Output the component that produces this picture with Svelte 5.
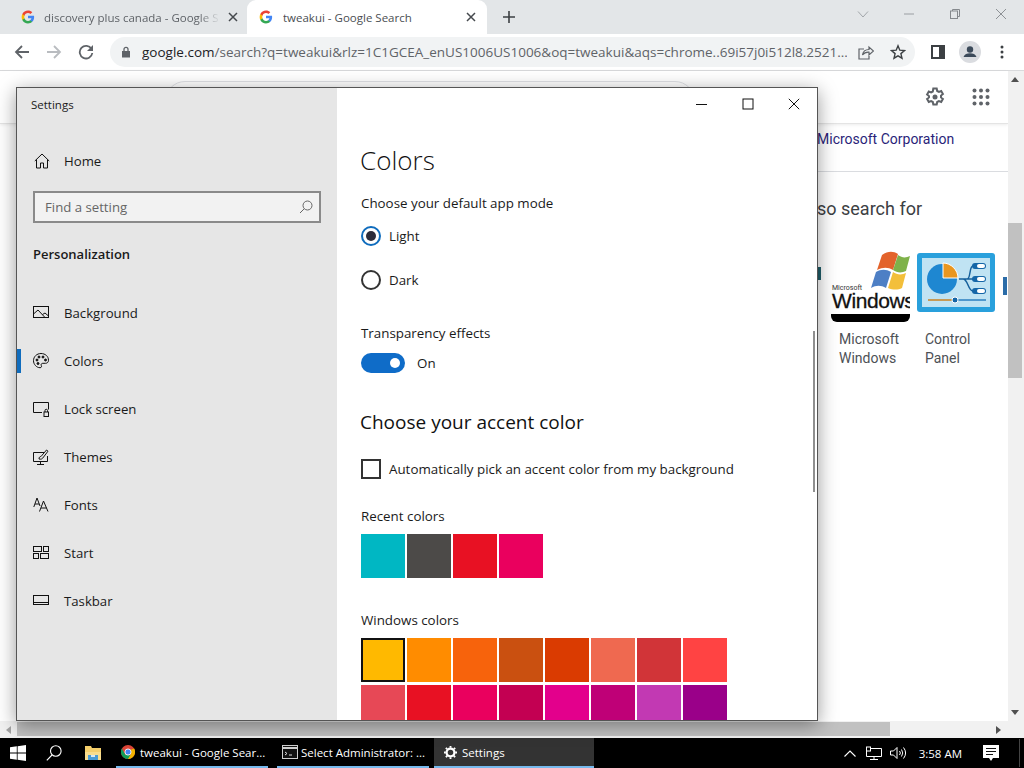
<script>
  const nav = [
    ['Background', 'bg'], ['Colors', 'colors'], ['Lock screen', 'lock'], ['Themes', 'themes'],
    ['Fonts', 'fonts'], ['Start', 'start'], ['Taskbar', 'taskbar']
  ];
  const recent = ['#00b7c3', '#4c4a48', '#e81123', '#ea005e'];
  const win = ['#ffb900', '#ff8c00', '#f7630c', '#ca5010', '#da3b01', '#ef6950', '#d13438', '#ff4343',
    '#e74856', '#e81123', '#ea005e', '#c30052', '#e3008c', '#bf0077', '#c239b3', '#9a0089'];
</script>

{#snippet gicon()}
  <svg class="fav" viewBox="0 0 48 48" width="14" height="14">
    <path fill="#4285f4" d="M45 24c0-1.600-.1-3-.4-4.500H24v9h11.800c-.5 2.800-2 5-4.400 6.600v5.500h7.100C42.700 36.700 45 30.900 45 24z"/>
    <path fill="#34a853" d="M24 46c5.900 0 10.900-2 14.500-5.300l-7.100-5.500c-2 1.300-4.500 2.100-7.400 2.100-5.700 0-10.500-3.800-12.200-9H4.500v5.700C8.100 41.100 15.500 46 24 46z"/>
    <path fill="#fbbc05" d="M11.800 28.300c-.9-2.700-.9-5.800 0-8.600V14H4.500C1.500 20 1.500 28 4.500 34z"/>
    <path fill="#ea4335" d="M24 10.700c3.200 0 6.100 1.100 8.400 3.300l6.300-6.300C34.900 4.100 29.900 2 24 2 15.500 2 8.100 6.900 4.500 14l7.300 5.700c1.700-5.200 6.500-9 12.200-9z"/>
  </svg>
{/snippet}

{#snippet navicon(k)}
  <svg class="navicon" viewBox="0 0 16 16" width="16" height="16" fill="none" stroke="#111" stroke-width="1">
    {#if k === 'bg'}
      <rect x="0.500" y="1.500" width="15" height="11"/><path d="M.5 9 5 5l7 7.500M9.500 9.500 12 8l3.500 3"/>
    {:else if k === 'colors'}
      <path d="M8 .5C3.800.5.500 3.600.5 7.700c0 3.600 3 7 6.500 7 1.600 0 1.800-1.100 1.300-2.100-.6-1.300.2-2.300 1.500-2.300h2.700c1.800 0 3-1.200 3-3C15.500 3.300 12.200.5 8 .5z"/>
      <circle cx="4" cy="7" r="1" fill="#111"/><circle cx="6" cy="4" r="1" fill="#111"/><circle cx="10" cy="4" r="1" fill="#111"/><circle cx="12.500" cy="7" r="1" fill="#111"/><circle cx="5" cy="10.500" r="1" fill="#111"/>
    {:else if k === 'lock'}
      <path d="M9 11.500H.5v-10h15v7"/><rect x="11" y="11" width="4.500" height="4.500"/><path d="M12 11V9.500a1.200 1.200 0 0 1 2.500 0V11"/>
    {:else if k === 'themes'}
      <path d="M11 3.500H.5v9h14V7M7.500 12.500v2.500M4 15.500h7"/><path d="M6 10c0-2 1-2.500 2-2.500l5.500-6.500 1.500 1.200L9.800 9C9 10 8 10.500 6 10z"/>
    {:else if k === 'fonts'}
      <path d="M.8 10 4 1l3 8M2 7h4M6.500 14.500 10.500 4l4.500 10.500M8 11h5.500"/>
    {:else if k === 'start'}
      <rect x="0.500" y="1.500" width="8" height="5"/><rect x="10.500" y="1.500" width="5" height="5"/><rect x="0.500" y="8.500" width="5" height="5"/><rect x="7.500" y="8.500" width="8" height="5"/>
    {:else}
      <rect x="0.500" y="2.500" width="15" height="9"/><path d="M.5 9.500h15"/>
    {/if}
  </svg>
{/snippet}

<div class="screen">
  <div class="tabstrip">
    <div class="tab inactive">
      {@render gicon()}
      <span class="tabtitle fade">discovery plus canada - Google S</span>
      <svg class="tabx" viewBox="0 0 10 10" width="10" height="10"><path d="M1 1l8 8M9 1l-8 8" stroke="#45494d" stroke-width="1.500"/></svg>
    </div>
    <div class="tab active">
      {@render gicon()}
      <span class="tabtitle">tweakui - Google Search</span>
      <svg class="tabx" viewBox="0 0 10 10" width="10" height="10"><path d="M1 1l8 8M9 1l-8 8" stroke="#45494d" stroke-width="1.500"/></svg>
    </div>
    <svg class="plus" viewBox="0 0 12 12" width="12" height="12"><path d="M6 0v12M0 6h12" stroke="#3c4043" stroke-width="1.600"/></svg>
    <div class="winctl">
      <svg viewBox="0 0 12 12" width="12" height="12"><path d="M1 3.500l5 5.500 5-5.500" fill="none" stroke="#a2a6aa"/></svg>
      <svg viewBox="0 0 12 12" width="12" height="12"><path d="M1 6h10" stroke="#9a9ea2"/></svg>
      <svg viewBox="0 0 12 12" width="12" height="12" fill="none" stroke="#85898d"><rect x="1.500" y="3" width="7" height="7.500"/><path d="M3.500 3V1.500h7v7H8.500"/></svg>
      <svg viewBox="0 0 12 12" width="12" height="12"><path d="M1 1l10 10M11 1 1 11" stroke="#8d9195"/></svg>
    </div>
  </div>

  <div class="toolbar">
    <svg class="tool" viewBox="0 0 16 16" width="16" height="16"><path d="M15 8H2M8 2 2 8l6 6" fill="none" stroke="#5f6368" stroke-width="1.800"/></svg>
    <svg class="tool" viewBox="0 0 16 16" width="16" height="16"><path d="M1 8h13M8 2l6 6-6 6" fill="none" stroke="#b9bcc0" stroke-width="1.800"/></svg>
    <svg class="tool" viewBox="0 0 16 16" width="16" height="16"><path d="M13.500 5A6.300 6.300 0 1 0 14.300 9" fill="none" stroke="#5f6368" stroke-width="1.800"/><path d="M15 1v6H9z" fill="#5f6368"/></svg>
    <div class="omnibox">
      <svg viewBox="0 0 10 12" width="10" height="12"><path d="M1 5h8v6.500H1z" fill="#5f6368"/><path d="M3 5V3.300a2 2 0 0 1 4 0V5" fill="none" stroke="#5f6368" stroke-width="1.300"/></svg>
      <span class="url"><b>google.com</b>/search?q=tweakui&amp;rlz=1C1GCEA_enUS1006US1006&amp;oq=tweakui&amp;aqs=chrome..69i57j0i512l8.2521...</span>
      <svg class="share" viewBox="0 0 16 16" width="16" height="16" fill="none" stroke="#5f6368" stroke-width="1.200"><path d="M6 5H1v10h10v-3"/><path d="M4.500 11c.5-3.500 3-5.500 6.500-5.500V3l4.500 4-4.500 4V8.200C8.500 8 6 9 4.500 11z"/></svg>
      <svg class="star" viewBox="0 0 16 16" width="16" height="16"><path d="M8 1.800l1.800 4.400 4.700.4-3.600 3 1.100 4.600L8 11.800l-4 2.400 1.100-4.600-3.600-3 4.700-.4z" fill="none" stroke="#3c4043" stroke-width="1.400"/></svg>
    </div>
    <svg class="panel" viewBox="0 0 14 14" width="14" height="14"><rect x="1" y="1" width="12" height="12" fill="none" stroke="#3c4043" stroke-width="2"/><rect x="8" y="1" width="5" height="12" fill="#3c4043"/></svg>
    <div class="avatar">
      <svg viewBox="0 0 22 22" width="22" height="22"><circle cx="11" cy="11" r="11" fill="#dadce0"/><circle cx="11" cy="8.500" r="3.200" fill="#3c4a5a"/><path d="M4.500 16c1-2.800 3.500-3.800 6.500-3.800s5.500 1 6.500 3.800z" fill="#3c4a5a"/></svg>
    </div>
    <svg class="dots" viewBox="0 0 4 14" width="4" height="14"><circle cx="2" cy="2" r="1.500" fill="#3c4043"/><circle cx="2" cy="7" r="1.500" fill="#3c4043"/><circle cx="2" cy="12" r="1.500" fill="#3c4043"/></svg>
  </div>

  <div class="viewport">
    <div class="page">
      <div class="gheader">
        <div class="searchbox"></div>
        <svg class="gear" viewBox="0 0 20 20" width="20" height="20" fill="none" stroke="#5f6368" stroke-width="2"><path d="M8.300 1.500h3.400l.5 2.500 1.700.9 2.300-.9 1.700 3-1.900 1.600v1.800l1.900 1.600-1.700 3-2.300-.9-1.700.9-.5 2.500H8.300l-.5-2.500-1.700-.9-2.300.9-1.700-3 1.900-1.600V9.100L2.100 7.500l1.700-3 2.300.9 1.700-.9z"/><circle cx="10" cy="10" r="2.500" fill="#5f6368" stroke="none"/></svg>
        <svg class="apps" viewBox="0 0 18 18" width="18" height="18" fill="#5f6368">
          {#each [2.500, 9, 15.500] as y}{#each [2.500, 9, 15.500] as x}<circle cx={x} cy={y} r="2"/>{/each}{/each}
        </svg>
      </div>
      <div class="results">
        <div class="corp">Microsoft Corporation</div>
        <div class="rule"></div>
        <div class="also">so search for</div>
        <div class="cards">
          <div class="frag left"></div>
          <div class="card">
            <div class="winlogo">
              <svg class="flag" viewBox="0 0 40 42" width="40" height="42">
                <path d="M10 6c6-4 11-4 16-1l-5 16c-5-3-10-3-16 0z" fill="#e3632b" transform="translate(2 -1)"/>
                <path d="M28 5c4 3 8 3 12 1l-4 15c-4 2-9 2-13-1z" fill="#7fb24a"/>
                <path d="M6 22c5-3 10-3 15 0l-5 16c-5-3-10-3-15 0z" fill="#4d7fc5"/>
                <path d="M23 22c4 3 9 3 13 1l-4 15c-4 2-9 2-14 0z" fill="#f3bf3a"/>
              </svg>
              <span class="ms">Microsoft</span>
              <span class="wn">Windows</span>
              <div class="blackbar"></div>
            </div>
            <div class="cap">Microsoft<br>Windows</div>
          </div>
          <div class="card">
            <div class="cpanel">
              <svg viewBox="0 0 78 59" width="78" height="59">
                <rect width="78" height="59" rx="3" fill="#29a0dc"/>
                <rect x="5" y="5" width="68" height="49" fill="#c0e3f3"/>
                <circle cx="25" cy="26" r="15" fill="#1e87d1"/>
                <path d="M26 10v15h15c0-8-7-15-15-15z" fill="#e9961f" stroke="#fff"/>
                <path d="M42 26h8c4 0 2-13 6-13M50 26h6M46 26c5 0 5 12 10 12" fill="none" stroke="#15609c" stroke-width="1.500"/>
                <rect x="55" y="10" width="14" height="6" rx="3" fill="#1466a8"/><rect x="60" y="11" width="8" height="4" rx="2" fill="#fff"/>
                <rect x="55" y="23" width="14" height="6" rx="3" fill="#1466a8"/><rect x="60" y="24" width="8" height="4" rx="2" fill="#fff"/>
                <rect x="55" y="35" width="14" height="6" rx="3" fill="#1466a8"/><rect x="60" y="36" width="8" height="4" rx="2" fill="#fff"/>
                <path d="M11 47h26" stroke="#c79a55" stroke-width="2"/><path d="M40 47h29" stroke="#2b7fc0" stroke-width="1.500"/>
                <circle cx="38" cy="47" r="3" fill="#1466a8" stroke="#fff"/>
              </svg>
            </div>
            <div class="cap">Control<br>Panel</div>
          </div>
          <div class="frag right"></div>
        </div>
      </div>
      <div class="vscroll">
        <svg class="arrow" viewBox="0 0 8 5" width="8" height="5"><path d="M4 0l4 5H0z" fill="#505050"/></svg>
        <div class="vthumb"></div>
        <svg class="arrow down" viewBox="0 0 8 5" width="8" height="5"><path d="M4 5l4-5H0z" fill="#505050"/></svg>
      </div>
    </div>
    <div class="hscroll">
      <svg viewBox="0 0 5 8" width="5" height="8"><path d="M0 4l5-4v8z" fill="#a3a3a3"/></svg>
      <div class="hthumb"></div>
      <svg viewBox="0 0 5 8" width="5" height="8"><path d="M5 4 0 0v8z" fill="#505050"/></svg>
    </div>

    <div class="window">
      <aside class="side">
        <div class="wintitle">Settings</div>
        <div class="home">
          <svg class="navicon" viewBox="0 0 16 16" width="16" height="16" fill="none" stroke="#111"><path d="M.8 8 8 1l7.200 7M2.500 6.500v8.500h4v-5h3v5h4V6.500"/></svg>
          <span>Home</span>
        </div>
        <div class="find">
          <span>Find a setting</span>
          <svg viewBox="0 0 14 14" width="14" height="14" fill="none" stroke="#666"><circle cx="8.500" cy="5.500" r="4.500"/><path d="M5.200 8.800 1 13"/></svg>
        </div>
        <div class="cat">Personalization</div>
        <nav>
          {#each nav as [label, k]}
            <div class="row" class:sel={k === 'colors'}>
              {@render navicon(k)}
              <span>{label}</span>
            </div>
          {/each}
        </nav>
      </aside>
      <main class="content">
        <div class="caption">
          <svg viewBox="0 0 12 12" width="12" height="12"><path d="M0 6.500h11" stroke="#111"/></svg>
          <svg viewBox="0 0 12 12" width="12" height="12"><rect x="1" y="1" width="10" height="10" fill="none" stroke="#111"/></svg>
          <svg viewBox="0 0 12 12" width="12" height="12"><path d="M.8.800l10.400 10.400M11.200.800.800 11.200" stroke="#111"/></svg>
        </div>
        <h1>Colors</h1>
        <div class="label first">Choose your default app mode</div>
        <div class="radio">
          <span class="dot on"><i></i></span><span>Light</span>
        </div>
        <div class="radio">
          <span class="dot"></span><span>Dark</span>
        </div>
        <div class="label trans">Transparency effects</div>
        <div class="toggle">
          <span class="switch"><i></i></span><span>On</span>
        </div>
        <h2>Choose your accent color</h2>
        <div class="check"><span class="box"></span><span>Automatically pick an accent color from my background</span></div>
        <div class="label recent">Recent colors</div>
        <div class="swatches">
          {#each recent as c}<div class="sw" style="background:{c}"></div>{/each}
        </div>
        <div class="label wcol">Windows colors</div>
        <div class="swatches">
          {#each win as c, i}<div class="sw" class:picked={i === 0} style="background:{c}"></div>{/each}
        </div>
        <div class="cscroll"></div>
      </main>
    </div>
  </div>

  <div class="taskbar">
    <svg class="start" viewBox="0 0 16 16" width="16" height="16"><path d="M0 2.300 6.800 1.300v6.300H0zM7.600 1.200 16 0v7.600H7.600zM0 8.400h6.800v6.300L0 13.700zM7.600 8.400H16V16l-8.400-1.200z" fill="#fff"/></svg>
    <svg class="tsearch" viewBox="0 0 16 16" width="16" height="16" fill="none" stroke="#fff" stroke-width="1.100"><circle cx="9.800" cy="6" r="5.300"/><path d="M6 10 .8 15.300"/></svg>
    <svg class="folder" viewBox="0 0 16 16" width="16" height="16"><path d="M0 1h6l1 2h9v12H0z" fill="#f5cf6b"/><path d="M0 7h16v8H0z" fill="#f9dd8d"/><path d="M3 10h10v5H3z" fill="#4a9bd4"/><path d="M6 10h4v2H6z" fill="#d8e9f3"/></svg>
    <div class="titem chrome">
      <svg viewBox="0 0 16 16" width="14" height="14"><circle cx="8" cy="8" r="8" fill="#db4437"/><path d="M8 16A8 8 0 0 1 1 4l4 7 7 0.500z" fill="#0f9d58"/><path d="M15 4A8 8 0 0 1 8 16l3.500-6V5z" fill="#f4b400"/><circle cx="8" cy="8" r="3.500" fill="#4285f4" stroke="#fff"/></svg>
      <span>tweakui - Google Sear...</span>
    </div>
    <div class="titem cmd">
      <svg viewBox="0 0 16 14" width="16" height="14"><rect x=".5" y=".5" width="15" height="13" fill="#111" stroke="#cfcfcf"/><path d="M.5 3h15" stroke="#cfcfcf" stroke-width="2"/><path d="M3 7l2 1.500L3 10M7 10h3" stroke="#ddd" fill="none"/></svg>
      <span>Select Administrator: ...</span>
    </div>
    <div class="titem settings">
      <svg viewBox="0 0 14 14" width="13" height="13"><circle cx="7" cy="7" r="4.200" fill="none" stroke="#fff" stroke-width="2.400"/><path d="M7 0v14M0 7h14M2 2l10 10M12 2 2 12" stroke="#fff" stroke-width="2" stroke-dasharray="2 10 2 0"/></svg>
      <span>Settings</span>
    </div>
    <div class="tray">
      <svg class="chev" viewBox="0 0 12 7" width="12" height="7"><path d="M.5 6.500 6 1l5.500 5.500" fill="none" stroke="#fff" stroke-width="1.100"/></svg>
      <svg viewBox="0 0 16 14" width="16" height="14" fill="none" stroke="#fff"><path d="M4 2.500h11.500v8H.5V1M8 10.500V13M4 13.500h8"/><rect x=".5" y="1" width="4" height="4"/></svg>
      <svg viewBox="0 0 16 14" width="16" height="14" fill="none" stroke="#fff"><path d="M.5 5v4h3l3.500 3.500v-11L3.500 5zM9.500 5a3 3 0 0 1 0 4M11.500 3.500a6 6 0 0 1 0 7M13.500 1.500a9 9 0 0 1 0 11"/></svg>
      <span class="clock">3:58 AM</span>
      <svg class="notif" viewBox="0 0 16 17" width="16" height="17"><path d="M0 0h16v13h-6l-2 3-2-3H0z" fill="#fff"/><path d="M3 3.500h10M3 6.500h10M3 9.500h7" stroke="#111"/></svg>
      <div class="divider"></div>
    </div>
  </div>
</div>

<style>
  :global(body) { margin: 0; background: #fff; }
  .screen {
    width: 1024px; height: 768px; overflow: hidden; display: flex; flex-direction: column;
    font-family: "Open Sans", "Noto Sans", sans-serif; color: #1a1a1a;
  }

  .tabstrip { height: 34px; background: #e3e6e8; display: flex; align-items: flex-end; padding-left: 8px; flex: none; }
  .tab { width: 240px; height: 34px; display: flex; align-items: center; box-sizing: border-box; font-size: 11.500px; color: #5f6368; }
  .tab.inactive { padding: 0 9px 0 13px; width: 239px; }
  .tab.active { background: #fff; border-radius: 9px 9px 0 0; padding: 0 11px 0 12px; color: #4a4e52; }
  .fav { flex: none; margin-right: 9px; }
  .active .fav { margin-right: 10px; }
  .tabtitle { flex: 1; white-space: nowrap; overflow: hidden; }
  .fade { -webkit-mask-image: linear-gradient(90deg, #000 88%, transparent 100%); mask-image: linear-gradient(90deg, #000 88%, transparent 100%); margin-right: 8px; }
  .plus { margin: 0 0 11px 16px; }
  .winctl { margin-left: auto; display: flex; gap: 34px; padding: 0 17px 14px 0; align-self: flex-end; }

  .toolbar { height: 37px; box-sizing: border-box; background: #fff; display: flex; align-items: center; border-bottom: 1px solid #d9dadc; flex: none; padding-left: 14px; }
  .tool { margin-right: 16px; }
  .omnibox { width: 805px; height: 30px; border-radius: 15px; background: #f1f3f4; display: flex; align-items: center; padding-left: 11px; box-sizing: border-box; font-size: 13.500px; color: #5f6368; flex: none; }
  .omnibox svg { flex: none; }
  .url { margin-left: 11px; white-space: nowrap; width: 705px; overflow: hidden; flex: none; }
  .url b { font-weight: 400; color: #202124; }
  .share { margin-left: 11px; }
  .star { margin-left: 16px; }
  .panel { margin-left: 16px; }
  .avatar { margin-left: 14px; height: 22px; }
  .dots { margin-left: 19px; }

  .viewport { position: relative; flex: 1; display: flex; flex-direction: column; background: #fff; min-height: 0; }
  .page { flex: 1; position: relative; display: flex; flex-direction: column; min-height: 0; padding-right: 16px; }
  .gheader { height: 53px; box-sizing: border-box; flex: none; display: flex; align-items: center; border-bottom: 1px solid #e4e4e4; box-shadow: 0 1px 3px rgba(0,0,0,.08); padding-left: 165px; }
  .searchbox { width: 530px; height: 40px; align-self: flex-start; margin-top: 10px; border: 1px solid #dfe1e5; border-radius: 20px; box-sizing: border-box; }
  .gear { margin-left: 230px; }
  .apps { margin-left: 27px; margin-right: 18px; }
  .results { padding-left: 817px; flex: 1; overflow: hidden; }
  .corp { font-family: Roboto, sans-serif; font-size: 14px; color: #2b1f7a; margin-top: 6px; line-height: 18px; white-space: nowrap; }
  .rule { height: 1px; background: #dadce0; margin-top: 23px; }
  .also { font-family: Roboto, sans-serif; font-size: 18px; line-height: 24px; color: #3c4043; margin-top: 25px; }
  .cards { display: flex; margin-top: 25px; gap: 7px; }
  .frag { width: 4px; flex: none; }
  .frag.left { margin-right: 3px; height: 13px; margin-top: 21px; background: #1f5f6a; }
  .frag.right { height: 18px; margin-top: 31px; background: #2b6ca8; }
  .card { width: 79px; flex: none; font-family: Roboto, sans-serif; font-size: 14px; color: #4d5156; }
  .cap { line-height: 19px; padding-left: 8px; margin-top: 8px; white-space: nowrap; }
  .winlogo { height: 76px; width: 79px; position: relative; overflow: hidden; }
  .flag { position: absolute; left: 39px; top: 4px; }
  .ms { position: absolute; left: 1px; top: 39px; font-size: 7px; line-height: 6px; color: #333; }
  .wn { position: absolute; left: 1px; top: 45px; font-family: "Liberation Sans", sans-serif; font-size: 21px; font-weight: 400; line-height: 20px; color: #111; -webkit-text-stroke: .3px #111; letter-spacing: -.4px; }
  .blackbar { position: absolute; left: 0; right: 0; bottom: 0; height: 8px; background: #000; border-radius: 0 0 6px 6px; }
  .cpanel { height: 76px; padding-top: 7px; box-sizing: border-box; }
  .vscroll { position: absolute; right: 0; top: 0; bottom: 0; width: 16px; background: #f1f1f1; box-sizing: border-box; display: flex; flex-direction: column; align-items: flex-start; }
  .arrow { margin: 6px 0 0 3px; flex: none; }
  .arrow.down { margin-top: auto; margin-bottom: 6px; }
  .vthumb { width: 14px; height: 155px; background: #c1c1c1; margin-top: 141px; flex: none; }
  .hscroll { height: 17px; flex: none; background: #f1f1f1; display: flex; align-items: center; padding: 0 23px 0 6px; position: relative; z-index: 1; gap: 6px; }
  .hthumb { width: 873px; height: 14px; margin-bottom: 1px; background: #c1c1c1; margin-right: auto; }

  .window { position: absolute; z-index: 2; left: 16px; top: 16px; width: 802px; height: 634px; box-sizing: border-box; border: 1px solid #555; display: flex; overflow: hidden; box-shadow: 0 4px 18px rgba(0,0,0,.4); background: #fff; }
  .side { width: 320px; flex: none; background: #e6e6e6; display: flex; flex-direction: column; font-size: 13.200px; color: #1a1a1a; }
  .wintitle { font-size: 11.500px; line-height: 16px; padding: 9px 0 0 14px; }
  .home { display: flex; align-items: center; gap: 14px; margin-top: 38px; padding-left: 17px; height: 20px; }
  .find { margin: 20px 0 0 16px; width: 288px; height: 32px; box-sizing: border-box; border: 2px solid #8a8a8a; background: #f2f2f2; display: flex; align-items: center; justify-content: space-between; padding: 0 6px 0 10px; color: #666; }
  .cat { font-weight: 600; font-size: 13px; line-height: 18px; margin: 22px 0 0 16px; }
  nav { margin-top: 26px; display: flex; flex-direction: column; }
  .row { height: 48px; display: flex; align-items: center; gap: 15px; padding-left: 16px; position: relative; }
  .row.sel::before { content: ""; position: absolute; left: 0; top: 12px; width: 4px; height: 24px; background: #0f6cbd; }
  .navicon { flex: none; }

  .content { flex: 1; position: relative; padding-left: 24px; font-size: 13.350px; color: #1a1a1a; }
  .caption { display: flex; gap: 34px; justify-content: flex-end; padding: 10px 17px 0 0; height: 12px; }
  h1 { font-size: 26px; font-weight: 300; line-height: 34px; margin: 33px 0 0 -1px; color: #111; }
  .label { line-height: 18px; }
  .label.first { margin-top: 17px; }
  .radio { display: flex; align-items: center; gap: 8px; height: 20px; margin-top: 14px; }
  .radio + .radio { margin-top: 24px; }
  .dot { width: 20px; height: 20px; box-sizing: border-box; border: 2px solid #333; border-radius: 50%; display: flex; align-items: center; justify-content: center; }
  .dot.on { border-color: #0f6cbd; }
  .dot i { width: 10px; height: 10px; background: #2c2c3a; border-radius: 50%; }
  .label.trans { margin-top: 34px; }
  .toggle { display: flex; align-items: center; gap: 12px; margin-top: 11px; height: 20px; }
  .switch { width: 44px; height: 20px; background: #0f6cc8; border-radius: 10px; position: relative; }
  .switch i { position: absolute; right: 5px; top: 5px; width: 10px; height: 10px; background: #fff; border-radius: 50%; }
  h2 { font-size: 19px; font-weight: 400; line-height: 26px; margin: 36px 0 0 -1px; color: #111; }
  .check { display: flex; align-items: center; gap: 8px; margin-top: 24px; height: 20px; }
  .box { width: 20px; height: 20px; border: 2px solid #333; box-sizing: border-box; }
  .label.recent { margin-top: 28px; }
  .label.wcol { margin-top: 33px; }
  .swatches { display: flex; flex-wrap: wrap; column-gap: 2px; row-gap: 3px; width: 368px; margin-top: 9px; }
  .sw { width: 44px; height: 44px; box-sizing: border-box; }
  .sw.picked { border: 2px solid #111; }
  .cscroll { position: absolute; right: 2px; top: 243px; width: 2px; height: 161px; background: #8f8f8f; }

  .taskbar { height: 30px; background: #000; flex: none; display: flex; align-items: center; color: #fff; font-size: 11.500px; padding-left: 10px; }
  .tsearch { margin-left: 20px; }
  .folder { margin-left: 23px; }
  .titem { height: 30px; display: flex; align-items: center; flex: none; box-sizing: border-box; border-bottom: 2px solid #76b9ed; white-space: nowrap; }
  .chrome { width: 152px; margin-left: 15px; padding-left: 5px; gap: 5px; }
  .cmd { width: 152px; margin-left: 9px; padding-left: 5px; gap: 3px; }
  .settings { width: 160px; margin-left: 5px; padding-left: 10px; background: #333; gap: 5px; }
  .tray { margin-left: auto; display: flex; align-items: center; padding-right: 4px; gap: 8px; }
  .chev { margin-right: 2px; }
  .clock { margin-left: 5px; margin-right: 13px; }
  .divider { width: 1px; height: 28px; background: #444; margin-left: 12px; }
</style>
